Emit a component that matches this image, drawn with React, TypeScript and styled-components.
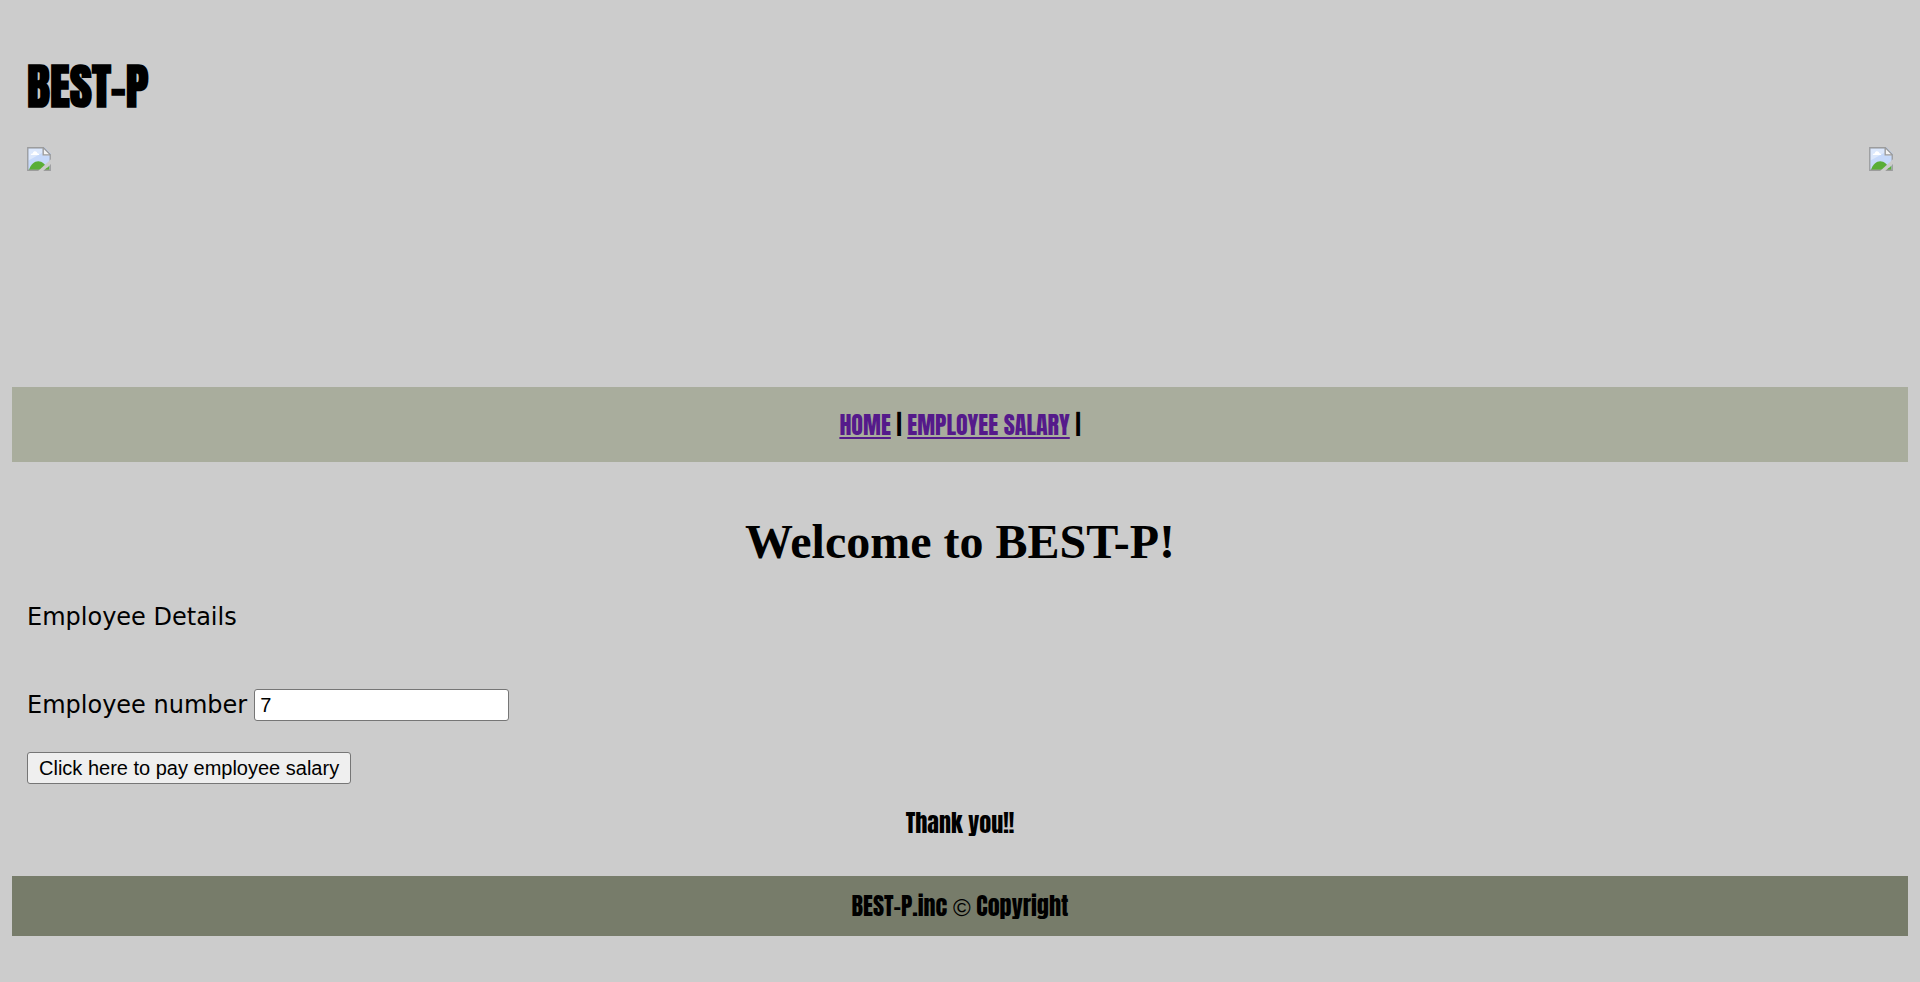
import React, { useState } from "react";
import styled, { createGlobalStyle } from "styled-components";

const display = `Impact, Anton, "Roboto Condensed", sans-serif`;

const GlobalStyle = createGlobalStyle`
  body {
    margin: 12px;
    background: #cccccc;
    color: #000000;
  }
`;

const Header = styled.header`
  padding: 36px 15px 0;
  min-height: 339px;
`;

const Brand = styled.h1`
  margin: 0 0 20px;
  font: 700 48px ${display};
  line-height: 79px;
`;

const ImageRow = styled.div`
  display: flex;
  justify-content: space-between;
`;

const NavBar = styled.nav`
  padding: 20px 15px 19px;
  background: #a9ad9d;
  font: 400 24px ${display};
  line-height: 36px;
  text-align: center;
`;

const NavLink = styled.a`
  color: #551a8b;
  text-decoration: underline;
  text-decoration-thickness: 2px;
  text-underline-offset: 2px;
  text-decoration-skip-ink: none;
`;

const Main = styled.main`
  padding: 52px 15px 35px;
`;

const Welcome = styled.h2`
  margin: 0 0 32px;
  font: 700 48px "Times New Roman", "Liberation Serif", serif;
  line-height: 56px;
  text-align: center;
`;

const Body = styled.div`
  font: 400 24px Verdana, "DejaVu Sans", sans-serif;
  line-height: 30px;
`;

const Intro = styled.p`
  margin: 0 0 57px;
`;

const Field = styled.div`
  display: flex;
  align-items: center;
  gap: 7px;
  margin-bottom: 31px;
`;

const NumberInput = styled.input`
  box-sizing: border-box;
  width: 255px;
  height: 32px;
  padding: 2px 5px;
  border: 1px solid #767676;
  border-radius: 3px;
  background: #ffffff;
  color: #000000;
  font: 400 20px Arial, "Liberation Sans", sans-serif;
`;

const PayButton = styled.button`
  display: block;
  box-sizing: border-box;
  height: 32px;
  padding: 0 11px;
  border: 1px solid #767676;
  border-radius: 3px;
  background: #efefef;
  color: #000000;
  font: 400 20px Arial, "Liberation Sans", sans-serif;
`;

const Thanks = styled.p`
  margin: 21px 0 0;
  font: 400 24px ${display};
  line-height: 36px;
  text-align: center;
`;

const Footer = styled.footer`
  padding: 12px 15px;
  background: #777c6a;
  font: 400 24px ${display};
  line-height: 36px;
  text-align: center;
`;

const Mark = styled.span`
  font-family: Arial, "Liberation Sans", sans-serif;
  line-height: 24px;
`;

function MissingImage() {
  return (
    <svg width="24" height="24" viewBox="0 0 16 16" aria-hidden="true">
      <path d="M0 0h11.500L16 4.500V16H0z" fill="#c6d9fa" />
      <path d="M1 1h9v3L1 9z" fill="#dce8fc" />
      <path d="M2.500 5.400c0-.8.7-1.200 1.300-1.100C4 3.300 4.700 2.900 5.400 2.900s1.400.5 1.500 1.300c.7 0 1.200.5 1.200 1.200z" fill="#ffffff" />
      <path d="M1.200 15.500C2.500 11.500 5 9.500 7.500 9.500c2.500 0 5 2 6.500 6z" fill="#5aae37" />
      <path d="M11.500 15.500l3.500-3.200v3.200z" fill="#5aae37" />
      <path d="M10.500.5l5 5h-5z" fill="#f3f3f3" />
      <path d="M.5.5h10.500l4.500 4.500v10.500H.5zM10.800.5v4.700h4.700" fill="none" stroke="#9c9c9c" strokeWidth="0.9" />
      <path d="M16 8.200v3.100L10.800 16H7.400z" fill="#cccccc" />
    </svg>
  );
}

export default function App() {
  const [employee, setEmployee] = useState("7");
  return (
    <>
      <GlobalStyle />
      <Header>
        <Brand>BEST-P</Brand>
        <ImageRow>
          <MissingImage />
          <MissingImage />
        </ImageRow>
      </Header>
      <NavBar>
        <NavLink href="#home">HOME</NavLink> | <NavLink href="#salary">EMPLOYEE SALARY</NavLink> |
      </NavBar>
      <Main>
        <Welcome>Welcome to BEST-P!</Welcome>
        <Body>
          <Intro>Employee Details</Intro>
          <Field>
            <label htmlFor="employee">Employee number</label>
            <NumberInput id="employee" value={employee} onChange={e => setEmployee(e.target.value)} />
          </Field>
          <PayButton type="button">Click here to pay employee salary</PayButton>
        </Body>
        <Thanks>Thank you!!</Thanks>
      </Main>
      <Footer>
        BEST-P.inc <Mark>©</Mark> Copyright
      </Footer>
    </>
  );
}
